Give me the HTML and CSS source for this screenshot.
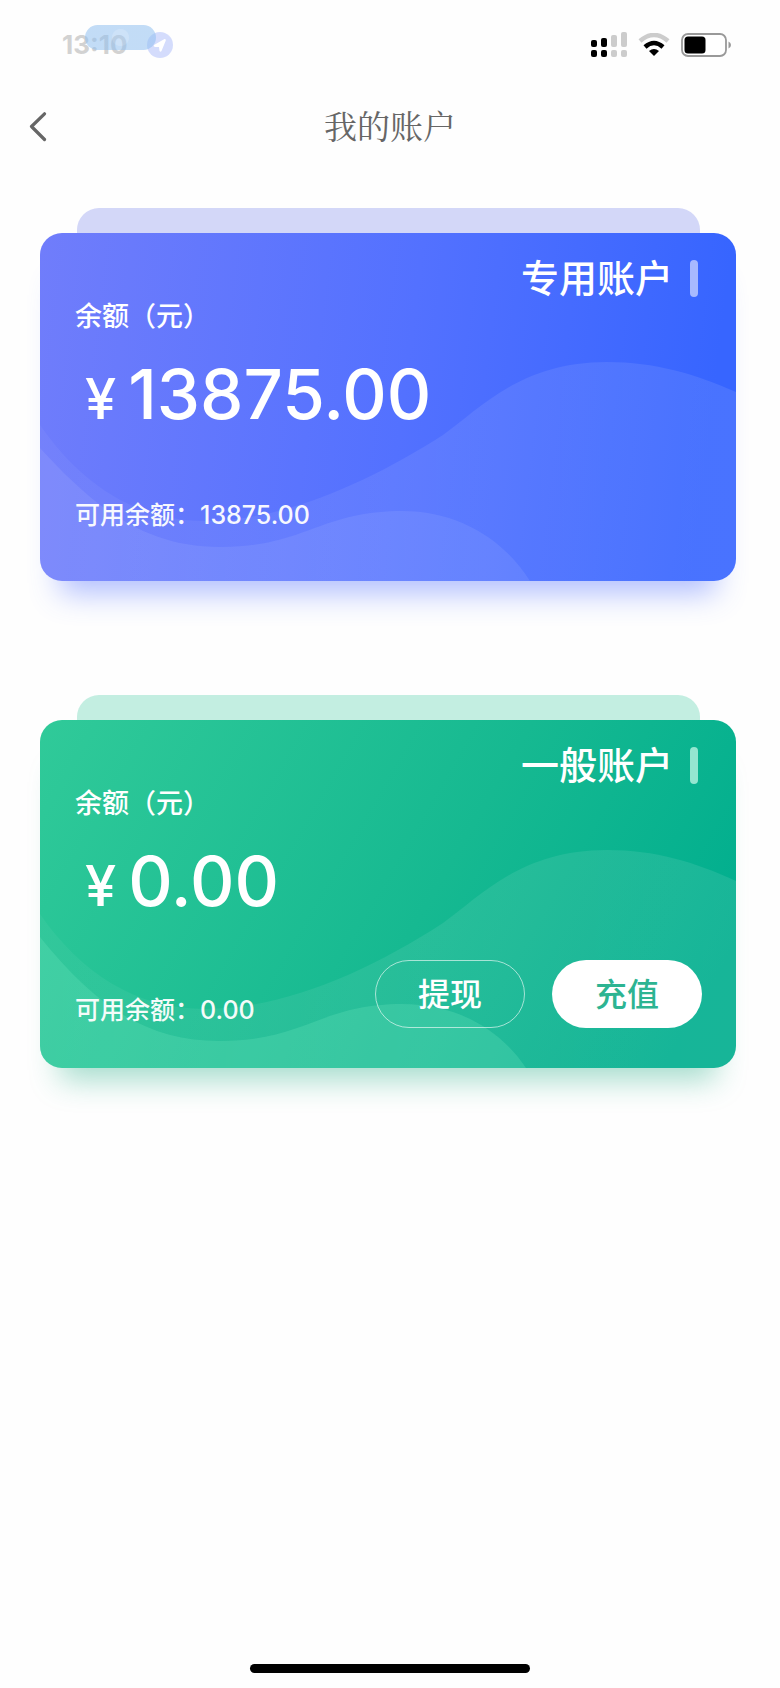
FILE: index.html
```html
<!DOCTYPE html>
<html lang="zh-CN">
<head>
    <meta charset="UTF-8">
    <meta name="viewport" content="width=device-width, initial-scale=1.0">
    <title>我的账户</title>
    <link rel="stylesheet" href="styles.css">
</head>
<body>
    <!-- Status Bar -->
    <div class="status-bar">
        <div class="status-left">
            <span class="status-time">13:10</span>
            <span class="status-pill"></span>
            <svg class="location-icon" viewBox="0 0 26 26">
                <circle cx="13" cy="13" r="13" fill="#cdd6fb" fill-opacity="0.85"/>
                <path d="M17.500 7 L7 13 Q6 14.500 8 15 L12 15 L12.500 19 Q13.500 20.500 14.500 19 L18.800 8.500 Q19 6.500 17.500 7 Z" fill="#fff"/>
            </svg>
        </div>
        <div class="status-right">
            <svg class="signal-icon" viewBox="0 0 36 26">
                <g fill="#000">
                    <rect x="0" y="8" width="6" height="7" rx="2"/>
                    <rect x="10" y="6" width="6" height="9" rx="2"/>
                    <rect x="0" y="18" width="6" height="7" rx="2"/>
                    <rect x="10" y="18" width="6" height="7" rx="2"/>
                </g>
                <g fill="#ccc">
                    <rect x="20" y="3" width="6" height="12" rx="2"/>
                    <rect x="30" y="0" width="6" height="15" rx="2"/>
                    <rect x="20" y="18" width="6" height="7" rx="2"/>
                    <rect x="30" y="18" width="6" height="7" rx="2"/>
                </g>
            </svg>
            <svg class="wifi-icon" viewBox="0 0 32 24">
                <path d="M2 8 Q16 -4 30 8" fill="none" stroke="#ccc" stroke-width="4.5"/>
                <path d="M7 14 Q16 6 25 14" fill="none" stroke="#000" stroke-width="4.5"/>
                <path d="M11 18 Q16 14 21 18 L16 23 Z" fill="#000"/>
            </svg>
            <svg class="battery-icon" viewBox="0 0 50 24">
                <rect x="1" y="1" width="44" height="22" rx="6" fill="#fff" stroke="#999" stroke-width="1.8"/>
                <rect x="3.5" y="3.5" width="21" height="17" rx="3.5" fill="#000"/>
                <path d="M47.5 8.5 Q50 9.5 50 12 Q50 14.500 47.500 15.500 Z" fill="#999"/>
            </svg>
        </div>
    </div>

    <!-- Nav Bar -->
    <header class="nav-bar">
        <button class="back-button" aria-label="返回">
            <svg class="back-icon" viewBox="0 0 18 30">
                <path d="M15.500 1.800 L2.500 14.500 L15.500 27.500" fill="none" stroke="#666" stroke-width="3.2" stroke-linecap="round" stroke-linejoin="round"/>
            </svg>
        </button>
        <h1 class="nav-title">我的账户</h1>
        <span></span>
    </header>

    <main class="accounts">
        <!-- Special Account -->
        <section class="account account-blue">
            <div class="card-tab"></div>
            <div class="card">
                <svg class="card-waves" viewBox="0 0 696 348" preserveAspectRatio="none">
                    <defs>
                        <linearGradient id="wave-fade">
                            <stop offset="0" stop-color="#fff" stop-opacity="0.04"/>
                            <stop offset="0.55" stop-color="#fff" stop-opacity="0.08"/>
                            <stop offset="1" stop-color="#fff" stop-opacity="0.09"/>
                        </linearGradient>
                    </defs>
                    <path class="wave-back" d="M0 192 C40 250 95 288 165 288 C240 288 325 252 403 202 C440 176 480 129 567 129 C615 129 655 141 696 159 L696 348 L0 348 Z"/>
                    <path class="wave-front" d="M0 215 C55 275 105 314 180 314 C265 314 280 278 362 278 C420 278 465 308 490 348 L0 348 Z"/>
                </svg>
                <h2 class="card-title">专用账户</h2>
                <p class="card-label">余额（元）</p>
                <p class="card-amount"><span class="currency">¥</span>13875.00</p>
                <div class="card-footer">
                    <p class="card-available">可用余额：13875.00</p>
                </div>
            </div>
        </section>

        <!-- General Account -->
        <section class="account account-green">
            <div class="card-tab"></div>
            <div class="card">
                <svg class="card-waves" viewBox="0 0 696 348" preserveAspectRatio="none">
                    <path class="wave-back" d="M0 194 C40 252 95 289 165 289 C240 289 325 254 403 203 C440 177 480 130 567 130 C615 130 655 142 696 161 L696 348 L0 348 Z"/>
                    <path class="wave-front" d="M0 217 C55 285 105 321 180 321 C265 321 280 284 362 284 C420 284 462 312 486 348 L0 348 Z"/>
                </svg>
                <h2 class="card-title">一般账户</h2>
                <p class="card-label">余额（元）</p>
                <p class="card-amount"><span class="currency">¥</span>0.00</p>
                <div class="card-footer">
                    <p class="card-available">可用余额：0.00</p>
                    <div class="card-actions">
                        <button class="btn btn-outline">提现</button>
                        <button class="btn btn-solid">充值</button>
                    </div>
                </div>
            </div>
        </section>
    </main>

    <div class="home-indicator"></div>
</body>
</html>
```
FILE: styles.css
```css
* {
    box-sizing: border-box;
}

body {
    margin: 0;
    min-height: 100vh;
    display: flex;
    flex-direction: column;
    background-color: #fefefe;
    color: #fff;
    font-family: Inter, "Noto Sans CJK SC", sans-serif;
}

h1, h2, p {
    margin: 0;
}

button {
    padding: 0;
    border: none;
    background: none;
    font-family: inherit;
    cursor: pointer;
}

svg {
    display: block;
}

/* Status bar */
.status-bar {
    display: flex;
    justify-content: space-between;
    align-items: center;
    height: 90px;
    padding: 0 49px 0 62px;
}

.status-left {
    position: relative;
    display: flex;
    align-items: center;
    gap: 20px;
}

.status-time {
    color: #d2d2d2;
    font-size: 26px;
    font-weight: 700;
    line-height: 30px;
}

.status-pill {
    position: absolute;
    left: 23px;
    top: -5px;
    width: 71px;
    height: 25px;
    border-radius: 13px;
    background: radial-gradient(circle at 50% 50%, rgba(165, 203, 243, 0.55) 8px, rgba(145, 192, 240, 0.55) 9px);
}

.location-icon {
    width: 26px;
    height: 26px;
}

.status-right {
    display: flex;
    align-items: center;
    gap: 11px;
}

.signal-icon {
    width: 36px;
    height: 26px;
}

.wifi-icon {
    width: 32px;
    height: 24px;
}

.battery-icon {
    width: 50px;
    height: 24px;
}

/* Nav bar */
.nav-bar {
    display: grid;
    grid-template-columns: 1fr auto 1fr;
    align-items: center;
    height: 74px;
    padding: 0 29px;
}

.back-icon {
    width: 18px;
    height: 30px;
}

.nav-title {
    padding-bottom: 5px;
    color: #666;
    font-family: "Noto Serif CJK SC", "Noto Serif SC", "Source Han Serif SC", "Noto Sans CJK SC", serif;
    font-size: 33px;
    font-weight: 400;
}

/* Account cards */
.accounts {
    flex: 1;
    display: flex;
    flex-direction: column;
    gap: 114px;
    padding: 44px 44px 0 40px;
}

.card-tab {
    height: 25px;
    margin: 0 36px 0 37px;
    border-radius: 22px 22px 0 0;
}

.card {
    position: relative;
    min-height: 348px;
    padding: 22px 34px 40px 35px;
    border-radius: 22px;
}

.account-blue .card-tab {
    background-color: #d3d7f8;
}

.account-blue .card {
    background: linear-gradient(97deg, #707dfb 0%, #5371ff 52%, #3765ff 94%);
    box-shadow: 0 32px 30px -20px rgba(80, 110, 255, 0.45);
}

.account-green .card-tab {
    background-color: #c3eee1;
}

.account-green .card {
    background: linear-gradient(120deg, #30ca99 0%, #16b991 55%, #00ae8e 92%);
    box-shadow: 0 32px 30px -20px rgba(30, 170, 130, 0.4);
}

.card-waves {
    position: absolute;
    top: 0;
    left: 0;
    width: 100%;
    height: 100%;
    border-radius: 22px;
}

.wave-back {
    fill: url(#wave-fade);
}

.wave-front {
    fill: rgba(255, 255, 255, 0.08);
}

.account-green .wave-front {
    fill: rgba(110, 230, 190, 0.25);
}

.card-title,
.card-label,
.card-amount,
.card-footer {
    position: relative;
}

.card-title {
    display: flex;
    justify-content: flex-end;
    align-items: center;
    gap: 17px;
    font-size: 38px;
    font-weight: 500;
    line-height: 46px;
}

.card-title::after {
    content: "";
    width: 8px;
    height: 37px;
    margin-right: 4px;
    border-radius: 4px;
    background-color: #a7b9ff;
}

.account-green .card-title::after {
    background-color: #94e6d0;
}

.card-label {
    font-size: 27px;
    font-weight: 500;
    line-height: 32px;
}

.card-amount {
    display: flex;
    align-items: baseline;
    gap: 12px;
    margin-top: 17px;
    padding-left: 10px;
    font-size: 69px;
    font-weight: 500;
    line-height: 88px;
}

.currency {
    font-size: 56px;
    line-height: 56px;
}

.card-footer {
    display: flex;
    justify-content: space-between;
    align-items: flex-end;
    min-height: 60px;
    margin-top: 35px;
}

.card-available {
    font-size: 25px;
    font-weight: 500;
    line-height: 36px;
    opacity: 0.95;
}

.card-actions {
    display: flex;
    gap: 27px;
}

.btn {
    width: 150px;
    height: 68px;
    padding-bottom: 5px;
    border-radius: 34px;
    font-size: 32px;
    font-weight: 500;
}

.btn-outline {
    border: 1px solid rgba(255, 255, 255, 0.6);
    color: #fff;
}

.btn-solid {
    background-color: #fff;
    color: #2db492;
}

/* Home indicator */
.home-indicator {
    width: 36%;
    height: 9px;
    margin: 0 auto 15px;
    border-radius: 5px;
    background-color: #000;
}
```
